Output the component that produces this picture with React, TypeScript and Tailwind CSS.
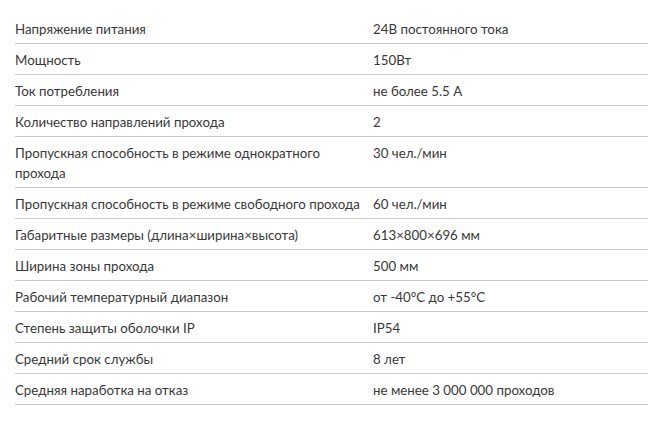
import React from "react";

const rows: [string, string][] = [
  ["Напряжение питания", "24В постоянного тока"],
  ["Мощность", "150Вт"],
  ["Ток потребления", "не более 5.5 А"],
  ["Количество направлений прохода", "2"],
  ["Пропускная способность в режиме однократного прохода", "30 чел./мин"],
  ["Пропускная способность в режиме свободного прохода", "60 чел./мин"],
  ["Габаритные размеры (длина×ширина×высота)", "613×800×696 мм"],
  ["Ширина зоны прохода", "500 мм"],
  ["Рабочий температурный диапазон", "от -40°C до +55°C"],
  ["Степень защиты оболочки IP", "IP54"],
  ["Средний срок службы", "8 лет"],
  ["Средняя наработка на отказ", "не менее 3 000 000 проходов"],
];

export default function App() {
  return (
    <div
      className="w-[648px] h-[429px] bg-white overflow-hidden pl-[15px] pt-[13px] text-[#383838] text-[13.3px] leading-[20px]"
      style={{ fontFamily: "Lato, 'Noto Sans', sans-serif" }}
    >
      {rows.map(([k, v], i) => (
        <div
          key={i}
          className="grid grid-cols-[358px_1fr] border-b border-[#c8c8c8]"
        >
          <div className="pt-[6px] pb-[4px] pr-1">{k}</div>
          <div className="pt-[6px] pb-[4px]">{v}</div>
        </div>
      ))}
    </div>
  );
}
